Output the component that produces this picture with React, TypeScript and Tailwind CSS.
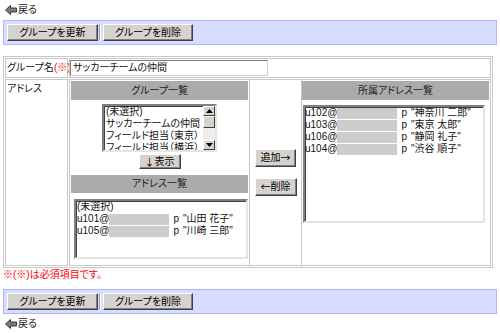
import React from "react";

const FONT =
  "[font-family:'Liberation_Sans','Noto_Sans_CJK_JP',sans-serif] [font-feature-settings:'palt']";

function Btn({ className, children }: { className: string; children: React.ReactNode }) {
  return (
    <div
      className={
        "flex items-center justify-center bg-[#d6d3ce] border border-t-white border-l-white border-r-[#404040] border-b-[#404040] shadow-[inset_-1px_-1px_0_#808080] text-black whitespace-nowrap " +
        className
      }
    >
      {children}
    </div>
  );
}

function Jp({ children }: { children: React.ReactNode }) {
  return <span className="[font-family:'Noto_Sans_CJK_JP',sans-serif]">{children}</span>;
}

function BackLink() {
  return (
    <div className="h-[20px] flex items-center pl-[5px] gap-[1px]">
      <svg width="12" height="10" viewBox="0 0 12 10">
        <polygon
          points="0.5,5 5.5,0.5 5.5,3 11.5,3 11.5,7 5.5,7 5.5,9.5"
          fill="#7a7a7a"
          stroke="#3a3a3a"
          strokeWidth="1"
        />
      </svg>
      <span className="text-[#222]">戻る</span>
    </div>
  );
}

function ButtonBar() {
  return (
    <div className="ml-[3px] w-[494px] h-[25px] border border-[#aeb8ff] bg-[#d8ddff] flex items-center pl-[3px]">
      <Btn className="w-[91px] h-[17px]">グループを更新</Btn>
      <div className="ml-[1px] mr-[2px] w-[2px] h-[15px] border-l border-l-[#a0a0a0] border-r border-r-white" />
      <Btn className="w-[90px] h-[17px]">グループを削除</Btn>
    </div>
  );
}

function Arrow({ up }: { up: boolean }) {
  return (
    <div className="h-[10px] flex items-center justify-center bg-[#d6d3ce] border border-t-white border-l-white border-r-[#404040] border-b-[#404040]">
      <svg width="7" height="4" viewBox="0 0 7 4">
        {up ? <polygon points="3.5,0 7,4 0,4" fill="#000" /> : <polygon points="0,0 7,0 3.5,4" fill="#000" />}
      </svg>
    </div>
  );
}

const LIST =
  "bg-white border-2 border-t-[#808080] border-l-[#808080] border-b-[#e6e4de] border-r-[#e6e4de] shadow-[inset_1px_1px_0_#404040] overflow-hidden";

function Row({ children }: { children: React.ReactNode }) {
  return <div className="h-[12px] flex items-center whitespace-pre">{children}</div>;
}

function AddrRow({ id, name }: { id: string; name: string }) {
  return (
    <Row>
      <span>{id}@</span>
      <span className="inline-block w-[60px] h-[11px] bg-[#cccccc]" />
      <span className="ml-[4px]">p</span>
      <span className="ml-[4px]">"{name}"</span>
    </Row>
  );
}

export default function App() {
  return (
    <div className={"w-[500px] h-[333px] overflow-hidden bg-white text-[10px] leading-[12px] text-[#111] " + FONT}>
      <BackLink />
      <ButtonBar />
      <div className="h-[11px]" />
      <div className="ml-[3px] w-[490px] border border-[#c8c8c8] p-[1px] grid grid-cols-[63px_1fr] gap-[1px]">
        <div className="border border-[#c8c8c8] h-[20px] flex items-center pl-[1px] whitespace-nowrap">
          グループ名<span className="text-[#ff0000]">(※)</span>
        </div>
        <div className="border border-[#c8c8c8] h-[20px] flex items-center">
          <div className="w-[198px] h-[16px] border border-t-[#7a7a7a] border-l-[#7a7a7a] border-b-[#d0d0d0] border-r-[#d0d0d0] flex items-center pl-[2px]">
            サッカーチームの仲間
          </div>
        </div>
        <div className="border border-[#c8c8c8] pl-[1px] pt-[3px]">アドレス</div>
        <div className="border border-[#c8c8c8] h-[187px] flex">
          {/* left column */}
          <div className="w-[180px] border-r border-[#c8c8c8] flex flex-col">
            <div className="mt-[1px] mx-[1px] h-[19px] bg-[#ababab] flex items-center justify-center text-[#222]">
              グループ一覧
            </div>
            <div className={"mt-[4px] self-center w-[115px] h-[48px] flex " + LIST}>
              <div className="flex-1 pl-[2px]">
                <Row>(未選択)</Row>
                <Row>サッカーチームの仲間</Row>
                <Row>フィールド担当（東京）</Row>
                <Row>フィールド担当（横浜）</Row>
              </div>
              <div className="w-[12px] flex flex-col">
                <Arrow up={true} />
                <div className="h-[12px] bg-[#d6d3ce] border border-t-white border-l-white border-r-[#404040] border-b-[#404040]" />
                <div className="flex-1 bg-[#eeede9]" />
                <Arrow up={false} />
              </div>
            </div>
            <Btn className="mt-[2px] self-center w-[42px] h-[15px]">
              <Jp>↓</Jp>表示
            </Btn>
            <div className="mt-[6px] mx-[1px] h-[18px] bg-[#ababab] flex items-center justify-center text-[#222]">
              アドレス一覧
            </div>
            <div className={"mt-[6px] ml-[4px] w-[174px] h-[60px] pl-[1px] " + LIST}>
              <Row>(未選択)</Row>
              <AddrRow id="u101" name="山田 花子" />
              <AddrRow id="u105" name="川崎 三郎" />
            </div>
          </div>
          {/* middle column */}
          <div className="w-[52px] border-r border-[#c8c8c8] flex flex-col items-center justify-center gap-[11px]">
            <Btn className="w-[41px] h-[18px]">
              追加<Jp>→</Jp>
            </Btn>
            <Btn className="w-[42px] h-[18px]">
              <Jp>←</Jp>削除
            </Btn>
          </div>
          {/* right column */}
          <div className="flex-1 flex flex-col">
            <div className="mt-[1px] mr-[1px] h-[19px] bg-[#ababab] flex items-center justify-center text-[#222]">
              所属アドレス一覧
            </div>
            <div className={"mt-[5px] ml-[1px] w-[182px] h-[118px] " + LIST}>
              <AddrRow id="u102" name="神奈川 二郎" />
              <AddrRow id="u103" name="東京 太郎" />
              <AddrRow id="u106" name="静岡 礼子" />
              <AddrRow id="u104" name="渋谷 順子" />
            </div>
          </div>
        </div>
      </div>
      <div className="mt-[1px] pl-[3px] h-[12px] text-[#ff0000]">※(※)は必須項目です。</div>
      <div className="h-[8px]" />
      <ButtonBar />
      <BackLink />
    </div>
  );
}
